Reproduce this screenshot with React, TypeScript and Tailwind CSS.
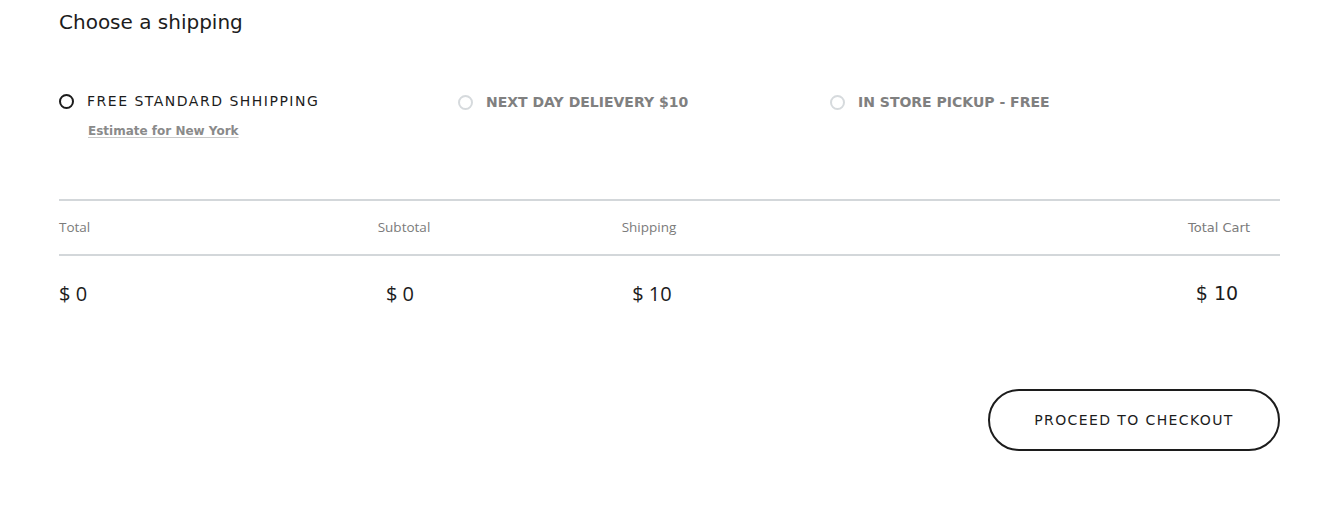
import React from "react";

const mont = "font-['DejaVu_Sans',sans-serif]";
const open = "font-['Open_Sans',sans-serif]";

function Radio({ active }: { active?: boolean }) {
  return (
    <span
      className={
        active
          ? "h-[15px] w-[15px] shrink-0 rounded-full border-2 border-[#1c1c1c]"
          : "h-[15px] w-[15px] shrink-0 rounded-full border-2 border-[#d6dadd]"
      }
    />
  );
}

export default function App() {
  return (
    <div className={`min-h-[522px] bg-white pl-[59px] pr-[47px] ${mont}`}>
      <h2 className="pt-[9px] text-[20px] leading-[26px] text-[#1c1c1c]">Choose a shipping</h2>

      {/* Shipping options */}
      <div className="mt-[56px] flex">
        <div className="w-[399px]">
          <label className="flex items-center gap-[13px]">
            <Radio active />
            <span className="text-[14px] tracking-[1.5px] text-[#1c1c1c]">FREE STANDARD SHHIPPING</span>
          </label>
          <a className="ml-[29px] mt-[10px] block text-[12px] font-semibold text-[#8a8a8a] underline decoration-[#c8c8c8] underline-offset-2">
            Estimate for New York
          </a>
        </div>
        <div className="w-[372px] pt-[1px]">
          <label className="flex items-center gap-[13px]">
            <Radio />
            <span className="text-[14px] font-semibold text-[#808080]">NEXT DAY DELIEVERY $10</span>
          </label>
        </div>
        <div className="pt-[1px]">
          <label className="flex items-center gap-[13px]">
            <Radio />
            <span className="text-[14px] font-semibold text-[#808080]">IN STORE PICKUP - FREE</span>
          </label>
        </div>
      </div>

      {/* Totals table */}
      <div className="mt-[59px] border-t-2 border-[#d3d7da]">
        <div className="grid h-[55px] grid-cols-[286px_118px_372px_1fr_122px] items-center border-b-2 border-[#d3d7da] text-[13px] text-[#7b7b7b]">
          <span className={`${open} text-[13.5px]`}>Total</span>
          <span className={`${open} text-center text-[13.5px]`}>Subtotal</span>
          <span className={`${open} text-center text-[13.5px]`}>Shipping</span>
          <span />
          <span className="text-center">Total Cart</span>
        </div>
        <div className="grid h-[75px] grid-cols-[286px_118px_372px_1fr_122px] items-center text-[20px] font-medium text-[#1c1c1c]">
          <span className={open}>$ 0</span>
          <span className={`${open} pr-[8px] text-center`}>$ 0</span>
          <span className={`${open} pl-[6px] text-center`}>$ 10</span>
          <span />
          <span className="pr-[4px] text-center text-[19px]">$ 10</span>
        </div>
      </div>

      <div className="mt-[58px] flex justify-end">
        <button className="h-[62px] w-[292px] rounded-full border-2 border-[#1c1c1c] text-[14px] tracking-[1.4px] text-[#1c1c1c]">
          PROCEED TO CHECKOUT
        </button>
      </div>
    </div>
  );
}
